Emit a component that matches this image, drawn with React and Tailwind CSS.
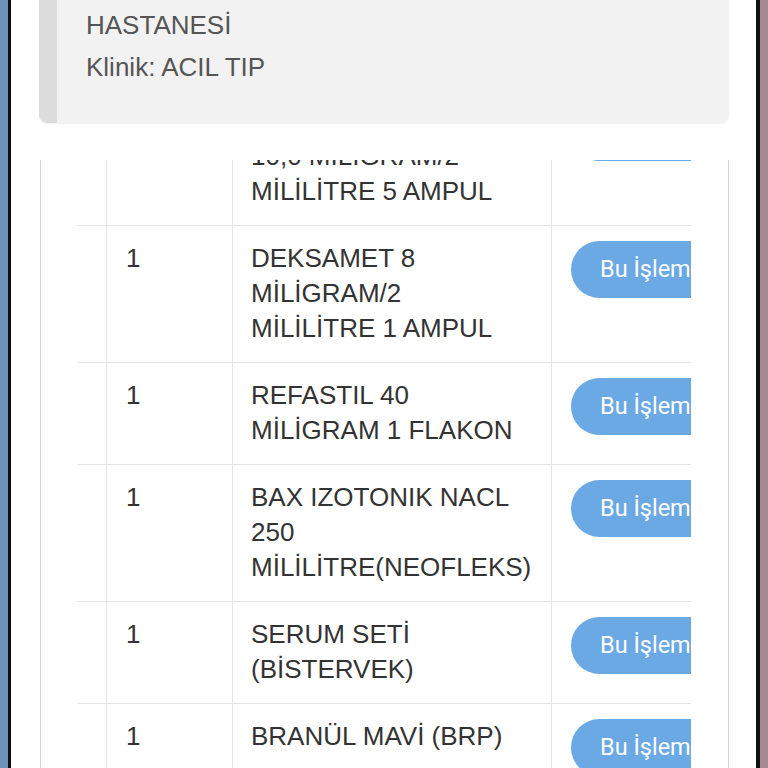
const rows = [
  { qty: "1", lines: ["ONDANSETRON", "10,0 MİLİGRAM/2", "MİLİLİTRE 5 AMPUL"] },
  { qty: "1", lines: ["DEKSAMET 8", "MİLİGRAM/2", "MİLİLİTRE 1 AMPUL"] },
  { qty: "1", lines: ["REFASTIL 40", "MİLİGRAM 1 FLAKON"] },
  { qty: "1", lines: ["BAX IZOTONIK NACL", "250", "MİLİLİTRE(NEOFLEKS)"] },
  { qty: "1", lines: ["SERUM SETİ", "(BİSTERVEK)"] },
  { qty: "1", lines: ["BRANÜL MAVİ (BRP)"] },
];

const Row = ({ row }) => {
  return (
    <div className="flex border-t border-[#e4e4e4]">
      <div className="w-[28px] shrink-0" />
      <div className="w-[126px] shrink-0 border-l border-[#e6e6e6] pb-[16px] pl-[19px] pr-[20px] pt-[15px]">
        {row.qty}
      </div>
      <div className="w-[319px] shrink-0 border-l border-[#e6e6e6] pb-[16px] pl-[18px] pr-[20px] pt-[15px]">
        {row.lines.map((l) => (
          <div key={l} className="whitespace-nowrap">
            {l}
          </div>
        ))}
      </div>
      <div className="shrink-0 border-l border-[#e6e6e6] pb-[16px] pl-[19px] pr-[20px] pt-[15px]">
        <button className="flex h-[57px] items-center whitespace-nowrap rounded-full bg-[#6ba9e4] px-[29px] font-['Roboto',sans-serif] text-[23.5px] text-white">
          Bu İşlem Tamamlandı
        </button>
      </div>
    </div>
  );
};

export default function App() {
  return (
    <div className="flex h-[768px] w-[768px] overflow-hidden bg-white font-['Liberation_Sans',Arial,sans-serif]">
      <div className="w-[8px] shrink-0 bg-[#6b93bb]" />
      <div className="w-[3px] shrink-0 bg-[#111]" />
      <div className="flex min-w-0 flex-1 flex-col">
        <div className="ml-[28px] mr-[27px] flex overflow-hidden rounded-b-[8px] shadow-[0_1px_2px_rgba(0,0,0,0.06)]">
          <div className="w-[18px] shrink-0 bg-[#dcdcdc]" />
          <div className="flex-1 bg-[#f2f2f2] pb-[39px] pl-[29px] pt-[8px] text-[26px] leading-[34px] text-[#555]">
            <div>HASTANESİ</div>
            <div className="mt-[8px]">Klinik: ACIL TIP</div>
          </div>
        </div>
        <div className="ml-[29px] mr-[27px] mt-[37px] h-[608px] overflow-hidden border-x border-[#d6d6d6]">
          <div className="mx-[37px] h-full overflow-hidden">
            <div className="-mt-[72px] w-max text-[26px] leading-[35px] text-[#333]">
              {rows.map((r, i) => (
                <Row key={i} row={r} />
              ))}
            </div>
          </div>
        </div>
      </div>
      <div className="w-[4px] shrink-0 bg-[#111]" />
      <div className="w-[8px] shrink-0 bg-[#a48a93]" />
    </div>
  );
}
